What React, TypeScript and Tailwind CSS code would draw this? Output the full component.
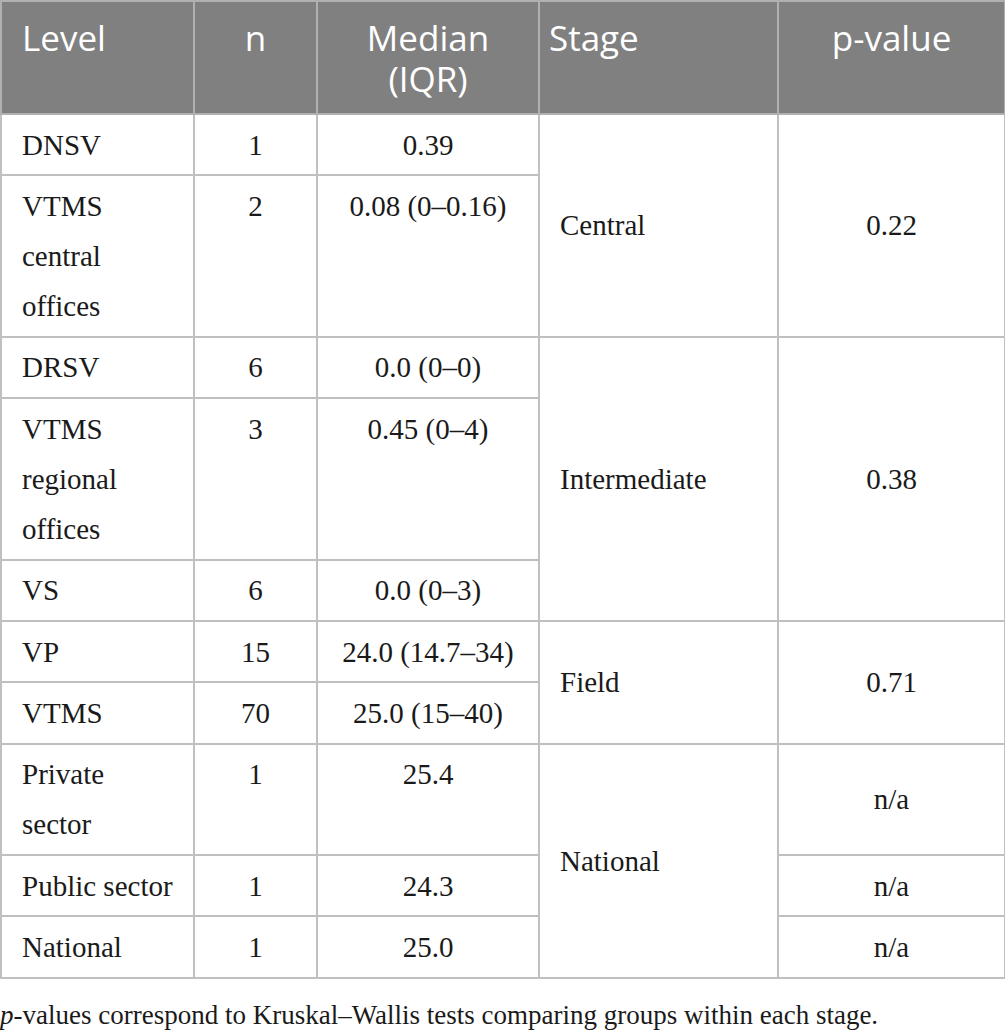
import React from "react";

const serif = { fontFamily: '"Liberation Serif", "Times New Roman", serif' };
const sans = { fontFamily: '"Open Sans", "Noto Sans", sans-serif' };

export default function App() {
  const base = "border-2 border-[#c0c0c0] px-[20px] py-[4.7px]";
  const td = `${base} align-top`;
  const tdc = `${td} text-center`;
  const tdm = `${base} align-middle`;
  const tdmc = `${tdm} text-center`;
  const th = "border-2 border-[#b0b0b0] align-top font-normal pt-[15px]";
  return (
    <div className="w-[1005px] bg-white">
      <table className="border-collapse w-[1004px] table-fixed" style={serif}>
        <colgroup>
          <col className="w-[193px]" />
          <col className="w-[123px]" />
          <col className="w-[222px]" />
          <col className="w-[239px]" />
          <col className="w-[227px]" />
        </colgroup>
        <thead>
          <tr className="bg-[#808080] text-white text-[35px] leading-[41px] h-[113px]" style={sans}>
            <th className={`${th} text-left pl-[20px]`}>Level</th>
            <th className={`${th} text-center`}>n</th>
            <th className={`${th} text-center`}>
              Median
              <br />
              (IQR)
            </th>
            <th className={`${th} text-left pl-[9px]`}>Stage</th>
            <th className={`${th} text-center`}>p-value</th>
          </tr>
        </thead>
        <tbody className="text-[29px] leading-[50px] text-[#1a1a1a]">
          <tr>
            <td className={td}>DNSV</td>
            <td className={tdc}>1</td>
            <td className={tdc}>0.39</td>
            <td className={tdm} rowSpan={2}>Central</td>
            <td className={tdmc} rowSpan={2}>0.22</td>
          </tr>
          <tr>
            <td className={td}>
              VTMS
              <br />
              central
              <br />
              offices
            </td>
            <td className={tdc}>2</td>
            <td className={tdc}>0.08 (0–0.16)</td>
          </tr>
          <tr>
            <td className={td}>DRSV</td>
            <td className={tdc}>6</td>
            <td className={tdc}>0.0 (0–0)</td>
            <td className={tdm} rowSpan={3}>Intermediate</td>
            <td className={tdmc} rowSpan={3}>0.38</td>
          </tr>
          <tr>
            <td className={td}>
              VTMS
              <br />
              regional
              <br />
              offices
            </td>
            <td className={tdc}>3</td>
            <td className={tdc}>0.45 (0–4)</td>
          </tr>
          <tr>
            <td className={td}>VS</td>
            <td className={tdc}>6</td>
            <td className={tdc}>0.0 (0–3)</td>
          </tr>
          <tr>
            <td className={td}>VP</td>
            <td className={tdc}>15</td>
            <td className={tdc}>24.0 (14.7–34)</td>
            <td className={tdm} rowSpan={2}>Field</td>
            <td className={tdmc} rowSpan={2}>0.71</td>
          </tr>
          <tr>
            <td className={td}>VTMS</td>
            <td className={tdc}>70</td>
            <td className={tdc}>25.0 (15–40)</td>
          </tr>
          <tr>
            <td className={td}>
              Private
              <br />
              sector
            </td>
            <td className={tdc}>1</td>
            <td className={tdc}>25.4</td>
            <td className={tdm} rowSpan={3}>National</td>
            <td className={tdmc}>n/a</td>
          </tr>
          <tr>
            <td className={`${td} whitespace-nowrap`}>Public sector</td>
            <td className={tdc}>1</td>
            <td className={tdc}>24.3</td>
            <td className={tdmc}>n/a</td>
          </tr>
          <tr>
            <td className={td}>National</td>
            <td className={tdc}>1</td>
            <td className={tdc}>25.0</td>
            <td className={tdmc}>n/a</td>
          </tr>
        </tbody>
      </table>
      <p className="text-[27px] leading-[40px] text-[#1a1a1a] mt-[16px]" style={serif}>
        <i>p</i>-values correspond to Kruskal–Wallis tests comparing groups within each stage.
      </p>
    </div>
  );
}
